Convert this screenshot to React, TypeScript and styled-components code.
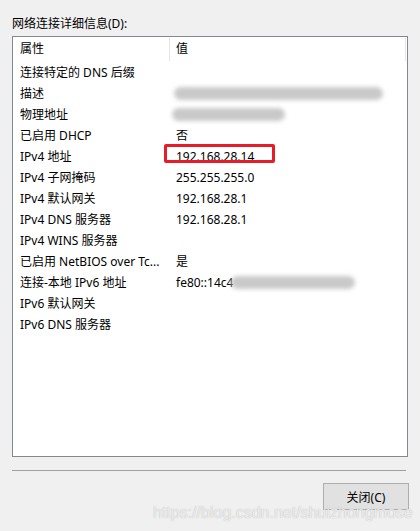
import React from "react";
import styled, { createGlobalStyle } from "styled-components";

const Global = createGlobalStyle`
  html, body { margin: 0; padding: 0; background: #f0f0f0; }
  body { font-family: "Noto Sans", "Noto Sans CJK SC", sans-serif; }
`;

const Window = styled.div`
  position: relative;
  width: 420px;
  height: 531px;
  box-sizing: border-box;
  background: #f0f0f0;
  padding: 16px 0 0 12px;
  display: flex;
  flex-direction: column;
  color: #000;
  font-size: 12px;
  overflow: hidden;
`;

const Label = styled.div`
  height: 16px;
  line-height: 16px;
  margin-bottom: 4px;
`;

const ListBox = styled.div`
  width: 396px;
  height: 421px;
  box-sizing: border-box;
  border: 1px solid #828790;
  background: #fff;
  display: flex;
  flex-direction: column;
`;

const HeaderRow = styled.div`
  position: relative;
  height: 25px;
  display: grid;
  grid-template-columns: 156px 1fr;
  align-items: center;
`;

const HeaderCell = styled.div<{ $divider?: boolean }>`
  height: 23px;
  line-height: 21px;
  padding-left: ${(p) => (p.$divider ? "6px" : "7px")};
  border-left: ${(p) => (p.$divider ? "1px solid #e5e5e5" : "none")};
  border-right: ${(p) => (p.$divider ? "1px solid #e5e5e5" : "none")};
  margin-right: ${(p) => (p.$divider ? "1px" : "0")};
`;

const Row = styled.div`
  height: 21px;
  display: grid;
  grid-template-columns: 157px 1fr;
  align-items: center;
  line-height: 21px;
  white-space: nowrap;
`;

const NameCell = styled.div`
  padding-left: 7px;
  overflow: hidden;
`;

const ValueCell = styled.div`
  position: relative;
  padding-left: 6px;
  display: flex;
  align-items: center;
`;

const Blur = styled.span<{ $w: number; $off?: number }>`
  display: inline-block;
  width: ${(p) => p.$w}px;
  height: 13px;
  margin-left: ${(p) => p.$off ?? -2}px;
  border-radius: 7px;
  background: #c9c9c9;
  filter: blur(2px);
`;

const Highlight = styled.div`
  position: absolute;
  left: -6px;
  top: -2px;
  width: 111px;
  height: 19px;
  box-sizing: border-box;
  border: 3px solid #e81c27;
  border-radius: 2px;
`;

const Separator = styled.div`
  width: 394px;
  height: 1px;
  margin-top: 13px;
  background: #a0a0a0;
`;

const Footer = styled.div`
  display: flex;
  justify-content: flex-end;
  padding-right: 11px;
  margin-top: 12px;
`;

const Button = styled.button`
  width: 86px;
  height: 27px;
  box-sizing: border-box;
  border: 1px solid #adadad;
  background: #e1e1e1;
  font-family: "Noto Sans", "Noto Sans CJK SC", sans-serif;
  font-size: 12px;
  color: #000;
  padding: 0;
`;

const Watermark = styled.div`
  position: absolute;
  left: 153px;
  top: 503px;
  font-family: "Liberation Sans", Arial, sans-serif;
  font-size: 16px;
  line-height: 20px;
  color: rgba(255, 255, 255, 0.75);
  text-shadow: 0 0 1px rgba(120, 120, 120, 0.6);
  white-space: nowrap;
  pointer-events: none;
`;

type Item = { name: string; value?: React.ReactNode };

const items: Item[] = [
  { name: "连接特定的 DNS 后缀" },
  { name: "描述", value: <Blur $w={209} /> },
  { name: "物理地址", value: <Blur $w={113} $off={-4} /> },
  { name: "已启用 DHCP", value: "否" },
  {
    name: "IPv4 地址",
    value: (
      <>
        192.168.28.14
        <Highlight />
      </>
    ),
  },
  { name: "IPv4 子网掩码", value: "255.255.255.0" },
  { name: "IPv4 默认网关", value: "192.168.28.1" },
  { name: "IPv4 DNS 服务器", value: "192.168.28.1" },
  { name: "IPv4 WINS 服务器" },
  { name: "已启用 NetBIOS over Tc...", value: "是" },
  {
    name: "连接-本地 IPv6 地址",
    value: (
      <>
        fe80::14c4
        <Blur $w={124} $off={-2} />
      </>
    ),
  },
  { name: "IPv6 默认网关" },
  { name: "IPv6 DNS 服务器" },
];

export default function App() {
  return (
    <>
      <Global />
      <Window>
        <Label>网络连接详细信息(D):</Label>
        <ListBox>
          <HeaderRow>
            <HeaderCell>属性</HeaderCell>
            <HeaderCell $divider>值</HeaderCell>
          </HeaderRow>
          {items.map((it) => (
            <Row key={it.name}>
              <NameCell>{it.name}</NameCell>
              <ValueCell>{it.value}</ValueCell>
            </Row>
          ))}
        </ListBox>
        <Separator />
        <Footer>
          <Button>关闭(C)</Button>
        </Footer>
        <Watermark>https://blog.csdn.net/shuizhongmose</Watermark>
      </Window>
    </>
  );
}
